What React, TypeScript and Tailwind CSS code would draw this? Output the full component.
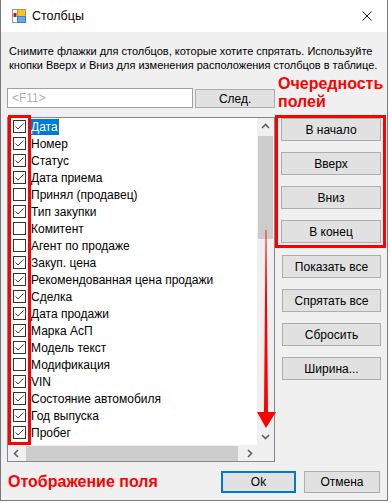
import React from "react";

const items: [string, boolean][] = [
  ["Дата", true],
  ["Номер", true],
  ["Статус", true],
  ["Дата приема", true],
  ["Принял (продавец)", false],
  ["Тип закупки", true],
  ["Комитент", false],
  ["Агент по продаже", false],
  ["Закуп. цена", true],
  ["Рекомендованная цена продажи", true],
  ["Сделка", true],
  ["Дата продажи", true],
  ["Марка АсП", true],
  ["Модель текст", true],
  ["Модификация", false],
  ["VIN", true],
  ["Состояние автомобиля", true],
  ["Год выпуска", true],
  ["Пробег", true],
];

function Checkbox({ checked }: { checked: boolean }) {
  return (
    <div className="w-[13px] h-[13px] shrink-0 border border-[#333333] bg-white">
      {checked && (
        <svg width="11" height="11" viewBox="0 0 11 11">
          <path d="M1.5 5.5 L4 8 L9.5 2.5" fill="none" stroke="#444" strokeWidth="1" />
        </svg>
      )}
    </div>
  );
}

function Btn({ children, className = "" }: { children: React.ReactNode; className?: string }) {
  return (
    <div
      className={
        "flex items-center justify-center border border-[#adadad] bg-[#e1e1e1] text-black " + className
      }
    >
      {children}
    </div>
  );
}

function Chevron({ dir }: { dir: "up" | "down" | "left" | "right" }) {
  const d = {
    up: "M1 6 L4.5 2.5 L8 6",
    down: "M1 3 L4.5 6.5 L8 3",
    left: "M6 1 L2.5 4.5 L6 8",
    right: "M3 1 L6.5 4.5 L3 8",
  }[dir];
  return (
    <svg width="9" height="9" viewBox="0 0 9 9">
      <path d={d} fill="none" stroke="#606060" strokeWidth="1.6" />
    </svg>
  );
}

export default function App() {
  return (
    <div className="w-[388px] h-[501px] border-x border-b border-[#7a7a7a] bg-[#f0f0f0] flex flex-col font-['Liberation_Sans',sans-serif] text-[12px] text-black">
      {/* title bar */}
      <div className="h-[32px] bg-white flex items-center pl-[10px] pr-[10px] shrink-0">
        <svg width="16" height="16" viewBox="0 0 16 16">
          <rect x="1.5" y="1.5" width="5" height="13" fill="#fff" stroke="#9a9a9a" />
          <rect x="2.5" y="5" width="3" height="4" fill="#c81414" />
          <rect x="6.5" y="1.5" width="8" height="7" fill="#f4c430" stroke="#c8962a" />
          <rect x="6.5" y="8.5" width="8" height="6" fill="#6aa6e8" stroke="#3d7cc9" />
        </svg>
        <span className="ml-[5px] text-[12.5px]">Столбцы</span>
        <svg className="ml-auto mr-[5px]" width="10" height="10" viewBox="0 0 10 10">
          <path d="M0.5 0.5 L9.5 9.5 M9.5 0.5 L0.5 9.5" stroke="#111" strokeWidth="1" />
        </svg>
      </div>

      <div className="px-[6px] flex flex-col">
        <div className="mt-[12px] ml-[2px] leading-[14px] text-[11px] whitespace-nowrap">
          Снимите флажки для столбцов, которые хотите спрятать. Используйте
          <br />
          кнопки Вверх и Вниз для изменения расположения столбцов в таблице.
        </div>

        <div className="flex">
          {/* left column */}
          <div className="w-[268px] shrink-0 flex flex-col">
            <div className="mt-[16px] flex">
              <div className="w-[187px] h-[20px] border border-[#a0a0a0] bg-white pl-[4px] flex items-center text-[#b0b0b0]">
                &lt;F11&gt;
              </div>
              <Btn className="ml-[2px] w-[80px] h-[19px] mt-[1px]">След.</Btn>
            </div>

            <div className="mt-[9px] h-[345px] border border-[#828790] bg-white relative flex flex-col">
              <div className="flex flex-1 min-h-0">
                <div className="flex-1 overflow-hidden flex flex-col">
                  {items.map(([label, checked], i) => (
                    <div key={label} className="h-[17px] flex items-center pl-[5px] shrink-0">
                      <Checkbox checked={checked} />
                      <span
                        className={
                          "ml-[4px] px-[1px] leading-[16px] whitespace-nowrap " +
                          (i === 0 ? "bg-[#0078d7] text-white" : "")
                        }
                      >
                        {label}
                      </span>
                    </div>
                  ))}
                </div>
                <div className="w-[17px] bg-[#f0f0f0] flex flex-col items-center">
                  <div className="h-[17px] flex items-center justify-center">
                    <Chevron dir="up" />
                  </div>
                  <div className="mt-[1px] w-[15px] h-[103px] bg-[#cdcdcd]" />
                  <div className="flex-1" />
                  <div className="h-[17px] flex items-center justify-center">
                    <Chevron dir="down" />
                  </div>
                </div>
              </div>
              <div className="h-[16px] flex">
                <div className="w-[250px] bg-[#f0f0f0] flex items-center">
                  <div className="w-[17px] flex justify-center">
                    <Chevron dir="left" />
                  </div>
                  <div className="ml-[1px] w-[212px] h-[15px] bg-[#cdcdcd]" />
                  <div className="ml-[3px] w-[17px] flex justify-center">
                    <Chevron dir="right" />
                  </div>
                </div>
                <div className="flex-1 bg-[#f0f0f0]" />
              </div>

              {/* annotation: checkbox column */}
              <div className="absolute left-0 top-[-3px] w-[23px] h-[330px] border-[3px] border-[#ff0000]" />
              {/* annotation: arrow */}
              <svg className="absolute left-[249px] top-[110px]" width="20" height="202" viewBox="0 0 20 202">
                <polygon points="8.6,2 9.4,2 11,184 19,184 9,200 0,184 7,184" fill="#ff0000" />
              </svg>
            </div>
          </div>

          {/* right column */}
          <div className="w-[111px] shrink-0 flex flex-col">
            <div className="mt-[3px] ml-[3px] text-[16px] font-bold leading-[18px] text-[#ff0000]">
              Очередность
              <br />
              полей
            </div>
            <div className="mt-[4px] border-[3px] border-[#ff0000] pl-[3px] pr-[2px] pb-[2px] flex flex-col gap-[11px]">
              <Btn className="h-[23px]">В начало</Btn>
              <Btn className="h-[23px]">Вверх</Btn>
              <Btn className="h-[23px]">Вниз</Btn>
              <Btn className="h-[23px]">В конец</Btn>
            </div>
            <div className="mt-[7px] pl-[7px] pr-[5px] flex flex-col gap-[11px]">
              <Btn className="h-[23px]">Показать все</Btn>
              <Btn className="h-[23px]">Спрятать все</Btn>
              <Btn className="h-[23px]">Сбросить</Btn>
              <Btn className="h-[23px]">Ширина...</Btn>
            </div>
          </div>
        </div>

        {/* bottom row */}
        <div className="mt-[9px] h-[22px] flex items-center">
          <div className="ml-[1px] text-[16px] font-bold text-[#ff0000]">Отображение поля</div>
          <div className="ml-auto w-[75px] h-[22px] border-2 border-[#0078d7] bg-[#e1e1e1] flex items-center justify-center">
            Ok
          </div>
          <Btn className="ml-[8px] mr-[1px] w-[76px] h-[22px]">Отмена</Btn>
        </div>
      </div>
    </div>
  );
}
